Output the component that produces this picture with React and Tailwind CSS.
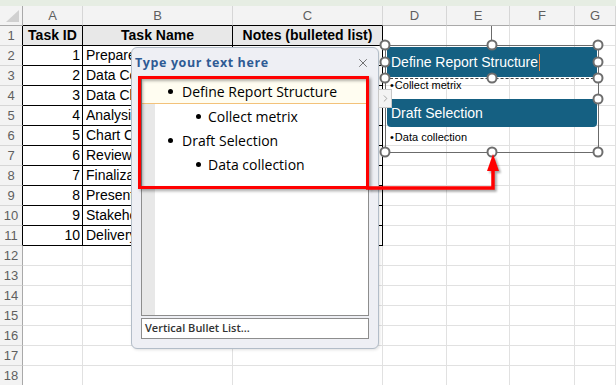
import React from "react";
import { X, ChevronRight } from "lucide-react";

const COLS = [
  { l: "A", w: "w-[60px]" },
  { l: "B", w: "w-[150px]" },
  { l: "C", w: "w-[150px]" },
  { l: "D", w: "w-[64px]" },
  { l: "E", w: "w-[63px]" },
  { l: "F", w: "w-[65px]" },
  { l: "G", w: "flex-1" },
];

const TASKS = [
  "Prepare Outline",
  "Data Collection",
  "Data Cleaning",
  "Analysis",
  "Chart Creation",
  "Review Draft",
  "Finalization",
  "Presentation",
  "Stakeholder Review",
  "Delivery",
];

function Handle({ x, y }) {
  return (
    <div
      className="absolute w-[11px] h-[11px] rounded-full border-2 border-[#6e6e6e] bg-white -translate-x-1/2 -translate-y-1/2"
      style={{ left: x, top: y }}
    />
  );
}

function Sheet() {
  const rows = Array.from({ length: 18 }, (_, i) => i + 1);
  return (
    <div className="flex flex-col">
      <div className="h-[6px] bg-[#e6ede3]" />
      <div className="flex h-[20px] bg-[#f3f3f3]">
        <div className="w-[23px] shrink-0 border-r border-b border-[#a9a9a9] relative">
          <svg className="absolute left-[6px] top-[4px]" width="13" height="12" viewBox="0 0 13 12">
            <polygon points="13,0 13,12 0,12" fill="#d0d0d0" />
          </svg>
        </div>
        {COLS.map((c, j) => (
          <div
            key={c.l}
            className={`${c.w} shrink-0 border-r border-b flex items-center justify-center text-[13px] text-[#5f5f5f] ${
              j < 3 ? "border-b-black border-r-[#d6d6d6]" : "border-[#d6d6d6] border-b-[#a9a9a9]"
            }`}
          >
            {c.l}
          </div>
        ))}
      </div>
      {rows.map((r) => (
        <div key={r} className="flex h-[20px] shrink-0">
          <div
            className={`w-[23px] shrink-0 bg-[#f3f3f3] border-r border-b border-b-[#d6d6d6] flex items-center justify-center text-[13px] text-[#5f5f5f] ${
              r <= 11 ? "border-r-black" : "border-r-[#a9a9a9]"
            }`}
          >
            {r}
          </div>
          {COLS.map((c, j) => {
            const inTable = j < 3 && r <= 11;
            let content = null;
            let align = "";
            if (r === 1 && j < 3) {
              content = ["Task ID", "Task Name", "Notes (bulleted list)"][j];
              align = "justify-center font-bold";
            } else if (inTable && j === 0) {
              content = r - 1;
              align = "justify-end pr-[2px]";
            } else if (inTable && j === 1) {
              content = (
                <span className="block w-[45px] overflow-hidden whitespace-nowrap">{TASKS[r - 2]}</span>
              );
              align = "justify-start pl-[3px]";
            }
            return (
              <div
                key={c.l}
                className={`${c.w} shrink-0 border-r border-b flex items-center overflow-hidden whitespace-nowrap text-[14px] text-black ${align} ${
                  inTable ? "border-black" : "border-[#e1e1e1]"
                } ${r === 1 && j < 3 ? "bg-[#e8e8e8]" : ""}`}
              >
                {content}
              </div>
            );
          })}
        </div>
      ))}
    </div>
  );
}

function Bullet() {
  return <div className="w-[5px] h-[5px] rounded-full bg-black shrink-0" />;
}

function TextPane() {
  return (
    <div className="absolute left-[131px] top-[47px] w-[248px] h-[302px] rounded-[6px] border border-[#b3bdc8] bg-[#eeeff4] flex flex-col shadow-[1px_1px_3px_rgba(0,0,0,0.12)] font-['Open_Sans',sans-serif]">
      <div className="h-[30px] shrink-0 flex items-center justify-between pl-[3px] pr-[8px]">
        <span className="text-[12.5px] font-bold tracking-[0.6px] text-[#2e5b94]">Type your text here</span>
        <X size={14} strokeWidth={1.4} color="#555" />
      </div>
      <div className="mx-[9px] h-[238px] shrink-0 border border-[#8d8d8d] bg-white flex flex-col">
        <div className="h-[25px] shrink-0 bg-[#fffdf1] border-b border-[#f3c27a] flex items-center pl-[26px] text-[14px] text-black">
          <Bullet />
          <span className="ml-[9px]">Define Report Structure</span>
        </div>
        <div className="flex-1 flex">
          <div className="w-[13px] shrink-0 bg-[#e8e8e8]" />
          <div className="flex-1 flex flex-col text-[14px] text-black">
            <div className="h-[24px] flex items-center pl-[41px]">
              <Bullet />
              <span className="ml-[7px]">Collect metrix</span>
            </div>
            <div className="h-[24px] flex items-center pl-[13px]">
              <Bullet />
              <span className="ml-[9px]">Draft Selection</span>
            </div>
            <div className="h-[24px] flex items-center pl-[41px]">
              <Bullet />
              <span className="ml-[7px]">Data collection</span>
            </div>
          </div>
        </div>
      </div>
      <div className="mx-[9px] mt-[2px] h-[21px] shrink-0 border border-[#8d8d8d] bg-white flex items-center pl-[3px] text-[11px] font-semibold text-[#333]">
        Vertical Bullet List...
      </div>
    </div>
  );
}

function SmartArt() {
  return (
    <>
      <div className="absolute left-[491px] top-[26px] w-px h-[15px] bg-[#6b6b6b]" />
      <div className="absolute left-[385px] top-[45px] w-[214px] h-[108px] border border-[#6b6b6b]" />
      <div className="absolute left-[387px] top-[47px] w-[210px] h-[30px] rounded-[3px] bg-[#156082] flex items-center pl-[4px] text-[14px] text-white">
        Define Report Structure
        <span className="ml-[1px] w-px h-[17px] bg-[#e8833a]" />
      </div>
      <div className="absolute left-[385px] top-[78px] w-[214px] border-t border-dashed border-[#444]" />
      <div className="absolute left-[390px] top-[78px] h-[15px] flex items-center text-[11px] text-black">
        <span className="mr-[1px]">•</span>Collect metrix
      </div>
      <div className="absolute left-[387px] top-[99px] w-[210px] h-[28px] rounded-[4px] bg-[#156082] flex items-center pl-[4px] text-[14px] text-white">
        Draft Selection
      </div>
      <div className="absolute left-[390px] top-[130px] h-[15px] flex items-center text-[11px] text-black">
        <span className="mr-[1px]">•</span>Data collection
      </div>
      {[
        [385, 45], [492, 45], [598, 45],
        [385, 62], [598, 62],
        [385, 78], [492, 78], [598, 78],
        [598, 99],
        [385, 152], [492, 152], [598, 152],
      ].map(([x, y], i) => (
        <Handle key={i} x={x} y={y} />
      ))}
    </>
  );
}

function ExpandTab() {
  return (
    <div className="absolute left-[378px] top-[89px] w-[14px] h-[19px] bg-[#f3f3f3] border border-[#c8c8c8] flex items-center justify-center">
      <ChevronRight size={11} strokeWidth={1.6} color="#8a8a8a" />
    </div>
  );
}

function Callout() {
  return (
    <>
      <div className="absolute left-[138px] top-[76px] w-[231px] h-[113px] border-[3px] border-[#ff0000] shadow-[2px_2px_3px_rgba(0,0,0,0.35),inset_2px_2px_3px_rgba(0,0,0,0.3)]" />
      <svg className="absolute left-[360px] top-[145px]" width="150" height="60" viewBox="0 0 150 60">
        <defs>
          <filter id="blur" x="-20%" y="-20%" width="140%" height="140%">
            <feGaussianBlur stdDeviation="1.2" />
          </filter>
        </defs>
        <g filter="url(#blur)" opacity="0.35" transform="translate(2,2)">
          <path d="M 8 43 H 133 V 24" fill="none" stroke="#000" strokeWidth="3.5" />
          <polygon points="133,9 127,26 139,26" fill="#000" />
        </g>
        <path d="M 6 43 H 133 V 24" fill="none" stroke="#ff0000" strokeWidth="3.5" />
        <polygon points="133,9 127,26 139,26" fill="#ff0000" />
      </svg>
    </>
  );
}

export default function App() {
  return (
    <div className="relative w-[616px] h-[385px] overflow-hidden bg-white font-['Liberation_Sans',Arial,sans-serif]">
      <Sheet />
      <SmartArt />
      <TextPane />
      <ExpandTab />
      <Callout />
    </div>
  );
}
